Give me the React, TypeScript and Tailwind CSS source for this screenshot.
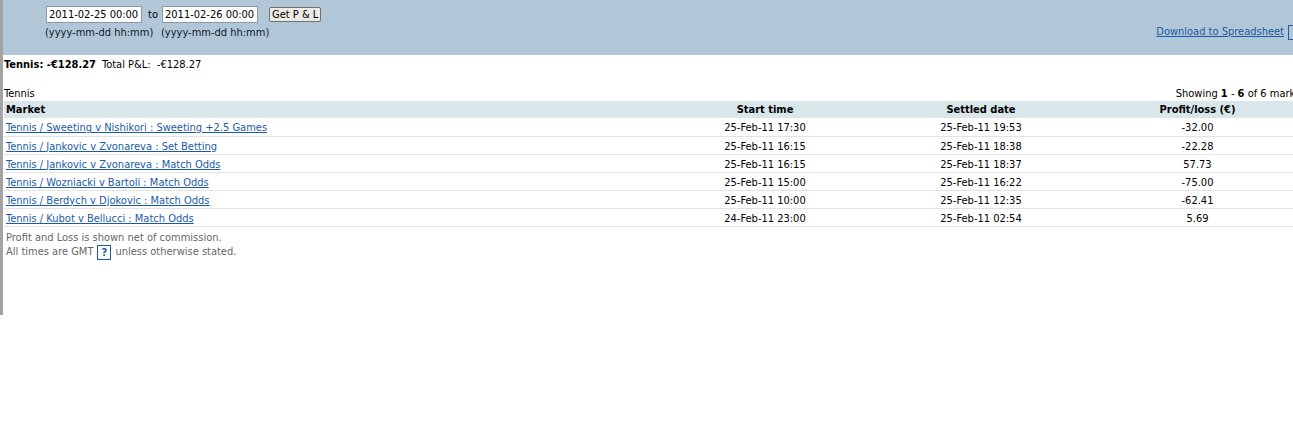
const rows = [
  { market: "Tennis / Sweeting v Nishikori : Sweeting +2.5 Games", start: "25-Feb-11 17:30", settled: "25-Feb-11 19:53", pl: "-32.00" },
  { market: "Tennis / Jankovic v Zvonareva : Set Betting", start: "25-Feb-11 16:15", settled: "25-Feb-11 18:38", pl: "-22.28" },
  { market: "Tennis / Jankovic v Zvonareva : Match Odds", start: "25-Feb-11 16:15", settled: "25-Feb-11 18:37", pl: "57.73" },
  { market: "Tennis / Wozniacki v Bartoli : Match Odds", start: "25-Feb-11 15:00", settled: "25-Feb-11 16:22", pl: "-75.00" },
  { market: "Tennis / Berdych v Djokovic : Match Odds", start: "25-Feb-11 10:00", settled: "25-Feb-11 12:35", pl: "-62.41" },
  { market: "Tennis / Kubot v Bellucci : Match Odds", start: "24-Feb-11 23:00", settled: "25-Feb-11 02:54", pl: "5.69" },
];

const HelpBox = () => (
  <span className="inline-flex items-center justify-center w-[14px] h-[15px] border border-[#1b5aa6] text-[#1b5aa6] font-bold text-[11px] leading-none">
    ?
  </span>
);

const DateField = ({ value, width }: { value: string; width: string }) => (
  <div className={`flex flex-col items-start ${width}`}>
    <input
      readOnly
      value={value}
      className="ml-[1px] w-[96px] h-[17px] bg-white border border-[#8a9aa8] px-[2px] text-[11px] text-black outline-none"
    />
    <span className="mt-[3px] text-[11px] leading-[13px] text-[#0c1a2a] whitespace-nowrap">(yyyy-mm-dd hh:mm)</span>
  </div>
);

export default function App() {
  return (
    <div
      className="w-[1293px] h-[423px] overflow-hidden bg-white text-[11px] text-black"
      style={{ fontFamily: "'DejaVu Sans Condensed', 'Liberation Sans', sans-serif" }}
    >
      <div className="w-[1310px] h-[315px] border-l-[3px] border-[#a3a3a3]">
        {/* Filter bar */}
        <div className="h-[55px] bg-[#b1c6d6] flex justify-between">
          <div className="flex items-start pt-[6px] pl-[42px]">
            <DateField value="2011-02-25 00:00" width="w-[102px]" />
            <span className="ml-[1px] w-[13px] mt-[2px] text-[11px] leading-[13px]">to</span>
            <DateField value="2011-02-26 00:00" width="w-[104px]" />
            <button className="ml-[4px] mt-[1px] h-[15px] px-[2px] border border-[#707070] rounded-[2px] bg-[#eceae4] text-[11px] leading-none whitespace-nowrap">
              Get P &amp; L
            </button>
          </div>
          <div className="flex items-center gap-[4px] mt-[24px] mr-[8px] self-start">
            <a className="text-[#1b5aa6] underline text-[11px] cursor-pointer">Download to Spreadsheet</a>
            <HelpBox />
          </div>
        </div>

        {/* Totals */}
        <div className="pl-[1px] pt-[3px] h-[18px] flex items-center gap-[6px]">
          <span className="font-bold">Tennis: -€128.27</span>
          <span>Total P&amp;L:&nbsp; -€128.27</span>
        </div>

        <div className="mt-[14px] pl-[1px] flex justify-between h-[14px] items-center">
          <span>Tennis</span>
          <span>
            Showing <b>1</b> - <b>6</b> of 6 markets
          </span>
        </div>

        <table className="ml-[1px] w-[1302px] border-collapse leading-[13px]">
          <thead>
            <tr className="bg-[#d9e6ea] h-[17px]">
              <th className="text-left font-bold pl-[2px] w-[653px] p-0">Market</th>
              <th className="font-bold w-[216px] p-0">Start time</th>
              <th className="font-bold w-[216px] p-0">Settled date</th>
              <th className="font-bold w-[217px] p-0">Profit/loss (€)</th>
            </tr>
          </thead>
          <tbody>
            {rows.map((r) => (
              <tr key={r.market} className="h-[18px] border-b border-[#e3e3e3]">
                <td className="pl-[2px] pt-[2px] pb-0">
                  <a className="text-[#1b5aa6] underline cursor-pointer">{r.market}</a>
                </td>
                <td className="text-center pt-[2px] pb-0 px-0">{r.start}</td>
                <td className="text-center pt-[2px] pb-0 px-0">{r.settled}</td>
                <td className="text-center pt-[2px] pb-0 px-0">{r.pl}</td>
              </tr>
            ))}
          </tbody>
        </table>

        <div className="pl-[3px] pt-[4px] text-[#666666] leading-[14px]">
          <div>Profit and Loss is shown net of commission.</div>
          <div className="flex items-center gap-[4px]">
            All times are GMT <HelpBox /> unless otherwise stated.
          </div>
        </div>
      </div>
    </div>
  );
}
